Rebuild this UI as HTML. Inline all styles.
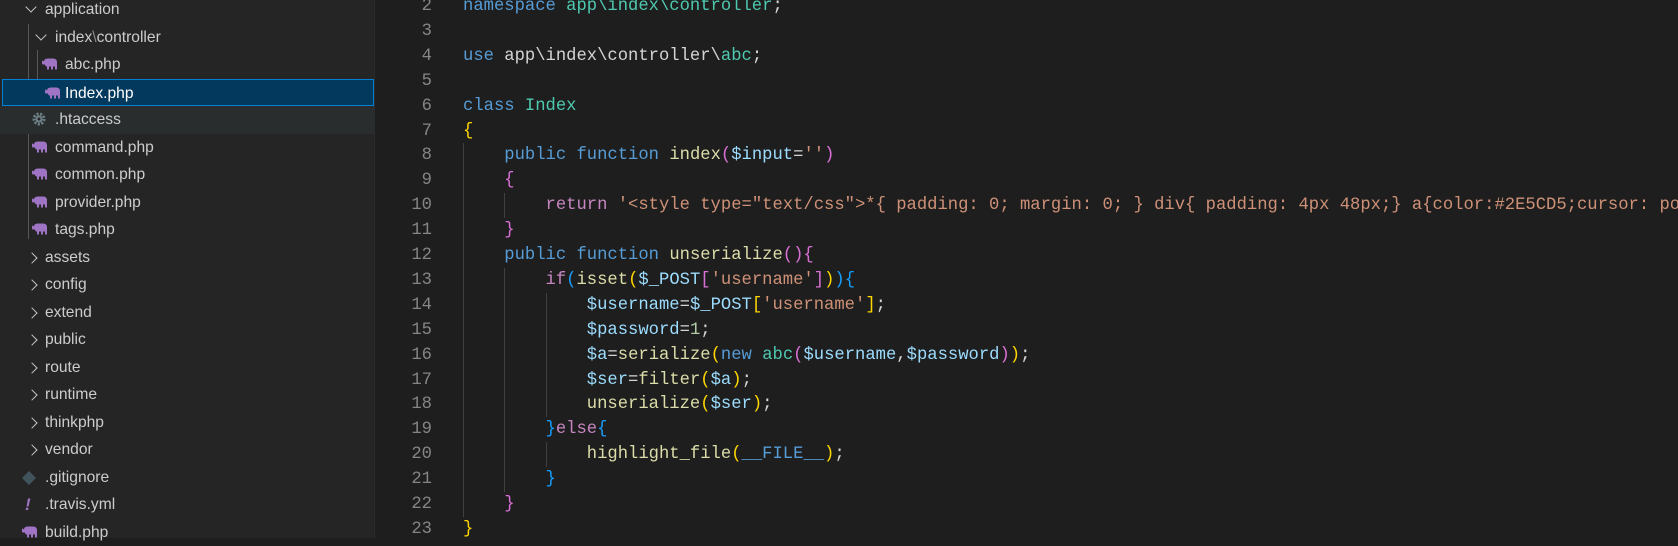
<!DOCTYPE html>
<html><head><meta charset="utf-8"><style>
*{margin:0;padding:0;box-sizing:border-box}
body{width:1678px;height:538px;overflow:hidden;background:#1e1e1e;position:relative;font-family:"Liberation Sans",sans-serif}
#side{position:absolute;left:0;top:0;width:375px;height:538px;background:#252526;border-right:1px solid #2b2b2b}
.r{position:absolute;left:0;width:375px;height:27.5px;line-height:27.5px;color:#cccccc;font-size:15.6px;white-space:nowrap}
.r span{position:absolute}
.sel{background:#04395e;border:1px solid #007fd4;left:2px;width:372px;color:#fff}
.hov{background:#2a2d2e}
.chev{position:absolute;width:8px;height:8px;border-right:1.5px solid #c5c5c5;border-bottom:1.5px solid #c5c5c5}
.down{transform:rotate(45deg)}
.right{transform:rotate(-45deg)}
.g{position:absolute;width:1px;background:#585858}
.ln{position:absolute;left:375px;width:57px;text-align:right;color:#858585;font-family:"Liberation Mono",monospace;font-size:17.2px;height:25px;line-height:25px}
#code{position:absolute;left:0;top:0;width:1678px;height:538px;overflow:hidden}
.c{position:absolute;left:463px;white-space:pre;color:#d4d4d4;font-family:"Liberation Mono",monospace;font-size:17.2px;height:25px;line-height:25px}
.k{color:#569cd6}.t{color:#4ec9b0}.f{color:#dcdcaa}.v{color:#9cdcfe}.s{color:#ce9178}.p{color:#c586c0}.n{color:#b5cea8}
.b1{color:#ffd700}.b2{color:#da70d6}.b3{color:#179fff}
.ig{position:absolute;width:1px;background:#404040}
</style></head><body>
<div id="side">
<div class="g" style="left:28px;top:24px;height:215px"></div>
<div class="g" style="left:37px;top:50px;height:54px"></div>
</div>
<svg width="0" height="0" style="position:absolute"><defs><symbol id="el" viewBox="0 0 16 12"><path d="M2 3 Q2 0 6 0 L11 0 Q15 0 15 4 L15 11 L13 11 L13 8 L11 8 L11 11 L9 11 L9 8 L7 8 L7 11 L5 11 L5 8 Q3 8 3 6 L1 6 Q0 6 0 5 L0 3 Q0 1 2 3 Z" fill="#a074c4"/></symbol></defs></svg>
<div id="rows"></div>
<div id="code"></div>
<script>
var rows=[
["application",45,"cd",25],["index<span style='position:static;color:#888'>\\</span>controller",55,"cd",35],
["abc.php",65,"el",42],["Index.php",65,"el",42,"sel"],[".htaccess",55,"gear",32,"hov"],
["command.php",55,"el",32],["common.php",55,"el",32],["provider.php",55,"el",32],["tags.php",55,"el",32],
["assets",45,"cr",28],["config",45,"cr",28],["extend",45,"cr",28],["public",45,"cr",28],["route",45,"cr",28],
["runtime",45,"cr",28],["thinkphp",45,"cr",28],["vendor",45,"cr",28],
[".gitignore",45,"git",22],[".travis.yml",45,"ex",22],["build.php",45,"el",22]];
var h="";
rows.forEach(function(r,i){
 var top=-3.75+i*27.5;
 var cls="r"+(r[4]?" "+r[4]:"");
 var ic="";
 if(r[2]=="cd")ic='<i class="chev down" style="left:'+(r[3]+2)+'px;top:7px"></i>';
 else if(r[2]=="cr")ic='<i class="chev right" style="left:'+(r[3])+'px;top:10px"></i>';
 else if(r[2]=="el")ic='<svg style="position:absolute;left:'+r[3]+'px;top:7px" width="16" height="13"><use href="#el"/></svg>';
 else if(r[2]=="gear")ic='<svg style="position:absolute;left:'+r[3]+'px;top:6px" width="14" height="14" viewBox="0 0 14 14"><circle cx="7" cy="7" r="5" fill="none" stroke="#6d8086" stroke-width="3" stroke-dasharray="2 1.5"/><circle cx="7" cy="7" r="3.5" fill="#6d8086"/><circle cx="7" cy="7" r="1.5" fill="#252526"/></svg>';
 else if(r[2]=="git")ic='<svg style="position:absolute;left:'+r[3]+'px;top:7px" width="14" height="14" viewBox="0 0 14 14"><path d="M7 0 L14 7 L7 14 L0 7Z" fill="#41535b"/></svg>';
 else if(r[2]=="ex")ic='<span style="left:'+(r[3]+3)+'px;color:#a074c4;font-weight:bold;font-style:italic;font-size:17px">!</span>';
 var l=r[1]-(r[4]=="sel"?3:0);
 h+='<div class="'+cls+'" style="top:'+top+'px">'+ic+'<span style="left:'+l+'px">'+r[0]+'</span></div>';
});
document.getElementById("rows").innerHTML=h;
var L={
2:'<span class="k">namespace</span> <span class="t">app\\index\\controller</span>;',
3:'',
4:'<span class="k">use</span> app\\index\\controller\\<span class="t">abc</span>;',
5:'',
6:'<span class="k">class</span> <span class="t">Index</span>',
7:'<span class="b1">{</span>',
8:'    <span class="k">public</span> <span class="k">function</span> <span class="f">index</span><span class="b2">(</span><span class="v">$input</span>=<span class="s">\'\'</span><span class="b2">)</span>',
9:'    <span class="b2">{</span>',
10:'        <span class="p">return</span> <span class="s">\'&lt;style type="text/css"&gt;*{ padding: 0; margin: 0; } div{ padding: 4px 48px;} a{color:#2E5CD5;cursor: po</span>',
11:'    <span class="b2">}</span>',
12:'    <span class="k">public</span> <span class="k">function</span> <span class="f">unserialize</span><span class="b2">(){</span>',
13:'        <span class="p">if</span><span class="b3">(</span><span class="f">isset</span><span class="b1">(</span><span class="v">$_POST</span><span class="b2">[</span><span class="s">\'username\'</span><span class="b2">]</span><span class="b1">)</span><span class="b3">){</span>',
14:'            <span class="v">$username</span>=<span class="v">$_POST</span><span class="b1">[</span><span class="s">\'username\'</span><span class="b1">]</span>;',
15:'            <span class="v">$password</span>=<span class="n">1</span>;',
16:'            <span class="v">$a</span>=<span class="f">serialize</span><span class="b1">(</span><span class="k">new</span> <span class="t">abc</span><span class="b2">(</span><span class="v">$username</span>,<span class="v">$password</span><span class="b2">)</span><span class="b1">)</span>;',
17:'            <span class="v">$ser</span>=<span class="f">filter</span><span class="b1">(</span><span class="v">$a</span><span class="b1">)</span>;',
18:'            <span class="f">unserialize</span><span class="b1">(</span><span class="v">$ser</span><span class="b1">)</span>;',
19:'        <span class="b3">}</span><span class="p">else</span><span class="b3">{</span>',
20:'            <span class="f">highlight_file</span><span class="b1">(</span><span class="k">__FILE__</span><span class="b1">)</span>;',
21:'        <span class="b3">}</span>',
22:'    <span class="b2">}</span>',
23:'<span class="b1">}</span>'};
var c="";
var cw=10.32;
function g(x,a,b){return '<div class="ig" style="left:'+x+'px;top:'+(-6+(a-2)*24.9)+'px;height:'+((b-a+1)*24.9)+'px"></div>';}
c+=g(463,8,22)+g(463+4*cw,10,10)+g(463+4*cw,13,21)+g(463+8*cw,14,18)+g(463+8*cw,20,20);
for(var i=2;i<=23;i++){var t=-6+(i-2)*24.9;c+='<div class="ln" style="top:'+t+'px">'+i+'</div><div class="c" style="top:'+t+'px">'+L[i]+'</div>';}
document.getElementById("code").innerHTML=c;
</script>
</body></html>
